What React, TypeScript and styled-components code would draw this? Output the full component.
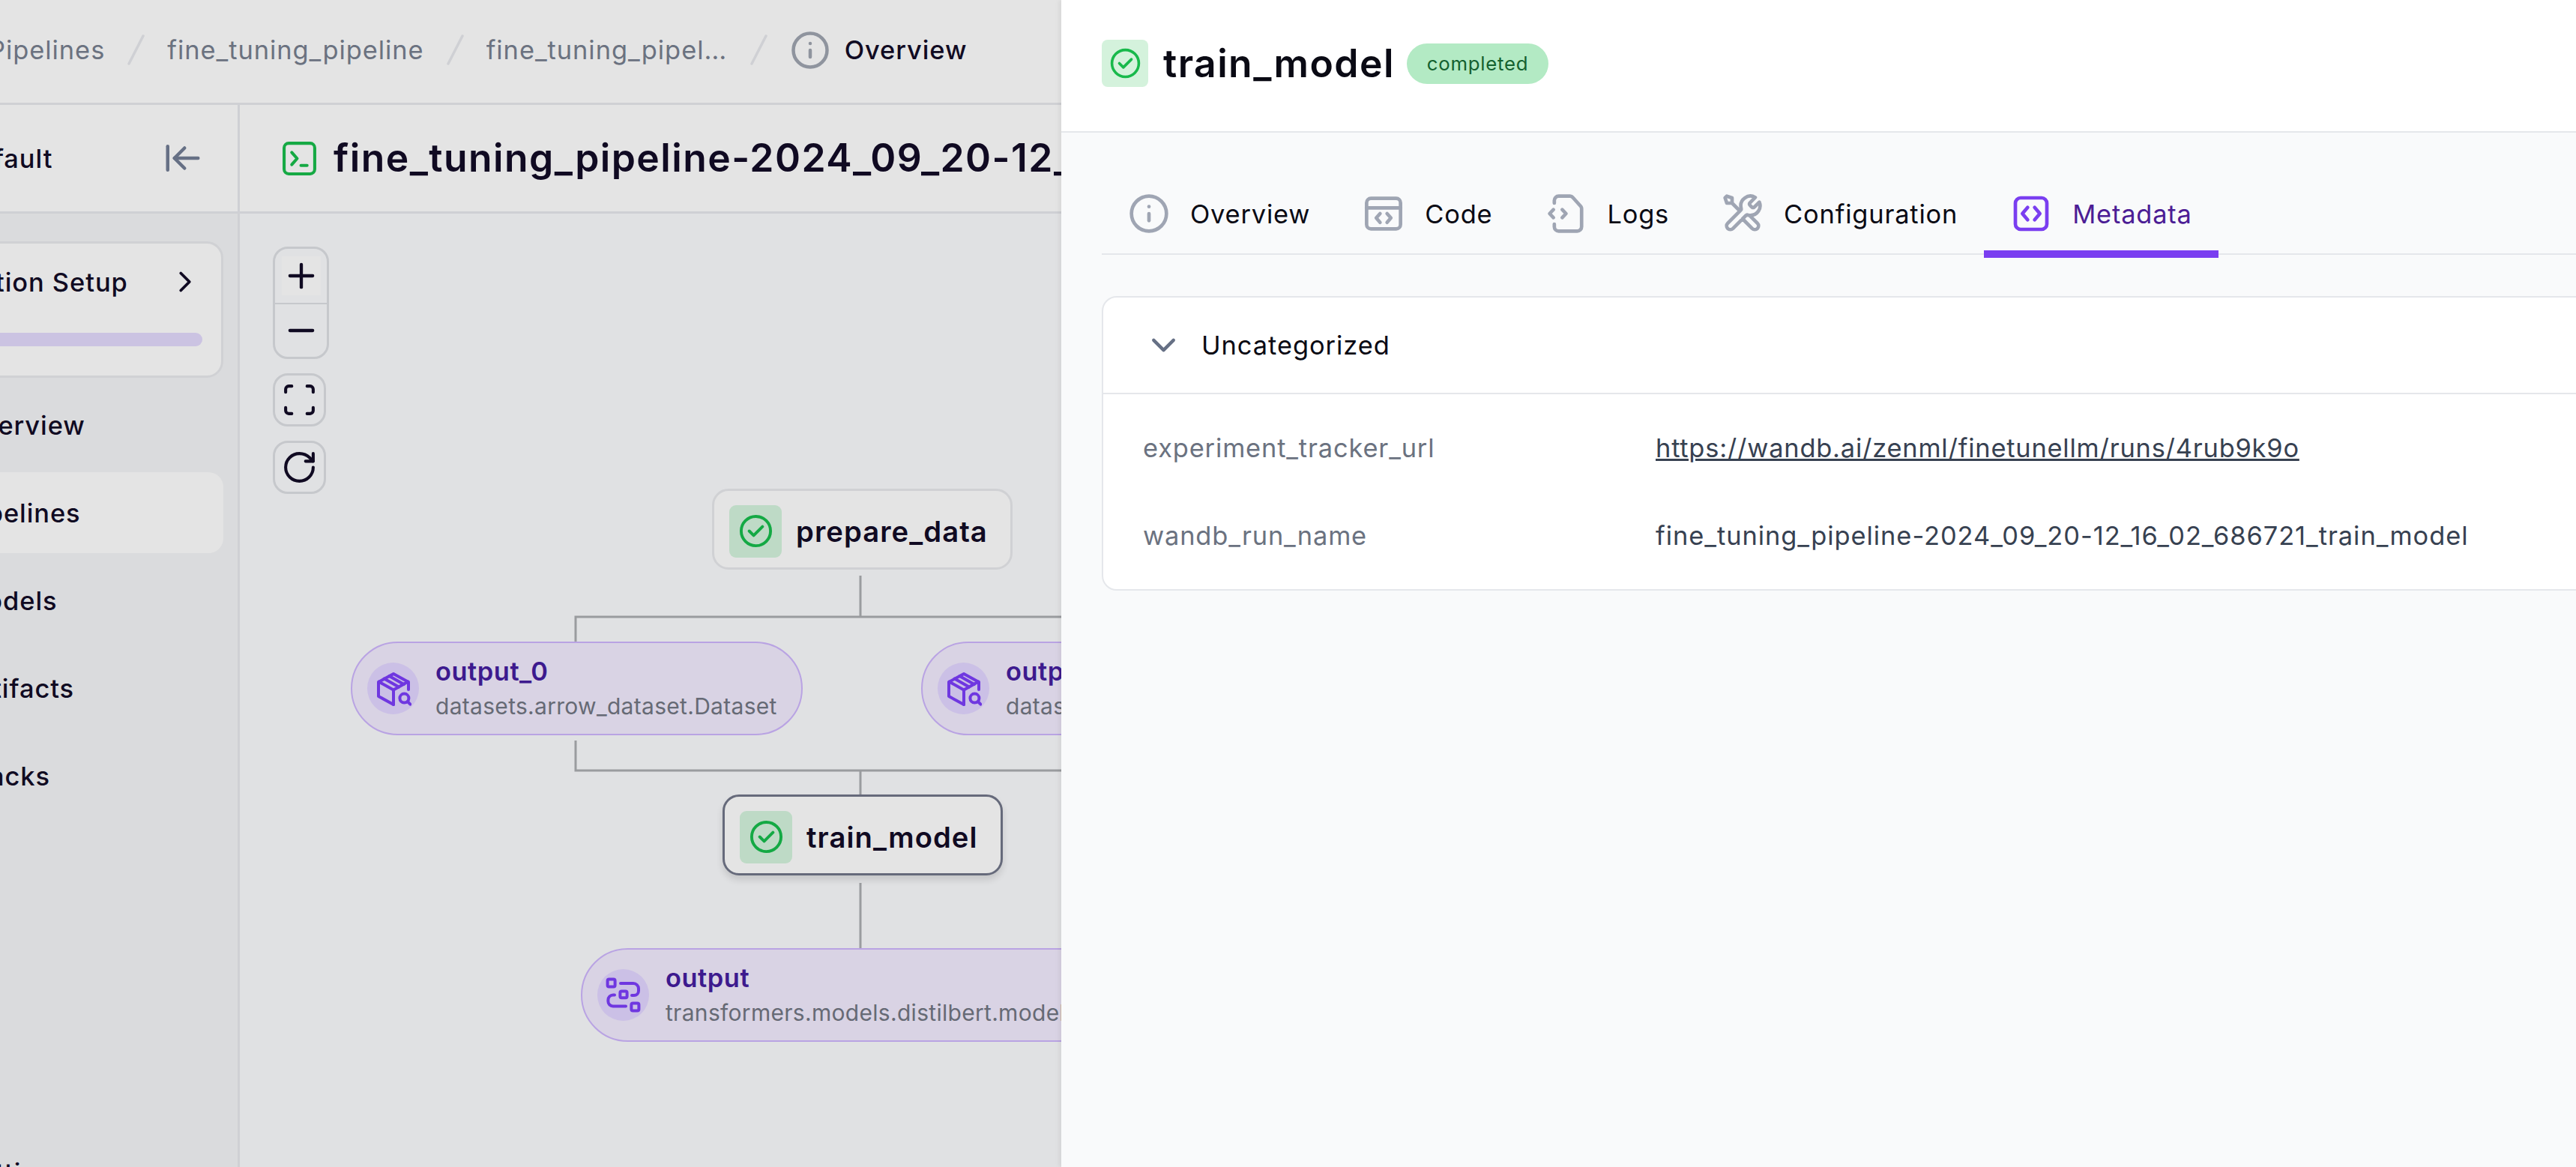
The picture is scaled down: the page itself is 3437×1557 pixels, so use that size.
import React from "react";
import styled, { createGlobalStyle } from "styled-components";
import { ArrowLeftToLine, ChevronDown, ChevronRight, Info, Minus, Plus, RotateCw, Scan } from "lucide-react";

const GlobalStyle = createGlobalStyle`
  html, body {
    margin: 0;
    padding: 0;
    overflow: hidden;
    background: #ffffff;
  }
  * {
    box-sizing: border-box;
    letter-spacing: 0.028em;
  }
`;

const Page = styled.div`
  display: flex;
  width: 3437px;
  height: 1557px;
  overflow: hidden;
  font-family: "Inter", "Noto Sans", sans-serif;
  font-optical-sizing: none;
  font-size: 34.4px;
  color: #100a22;
`;

const Dimmed = styled.div`
  flex: 0 0 1416px;
  display: flex;
  flex-direction: column;
  overflow: hidden;
  background: #e4e4e4;
`;

const TopBar = styled.header`
  flex: 0 0 140px;
  display: flex;
  align-items: center;
  gap: 30px;
  margin-left: -15px;
  padding-bottom: 4px;
  border-bottom: 3px solid #cfd0d4;
  white-space: nowrap;
`;

const Crumb = styled.span<{ $max?: number }>`
  color: #6b7280;
  max-width: ${(p) => (p.$max ? `${p.$max}px` : "none")};
  overflow: hidden;
  text-overflow: ellipsis;
`;

const CrumbCurrent = styled.span`
  display: flex;
  align-items: center;
  gap: 19px;
  font-weight: 500;
  color: #100a22;
`;

const Body = styled.div`
  flex: 1;
  display: flex;
  min-height: 0;
`;

const Sidebar = styled.aside`
  flex: 0 0 320px;
  display: flex;
  flex-direction: column;
  background: #dadbdd;
  border-right: 3px solid #cfd0d4;
  overflow: hidden;
`;

const SideHead = styled.div`
  flex: 0 0 145px;
  display: flex;
  align-items: center;
  justify-content: space-between;
  margin-left: -55px;
  padding-right: 46px;
  background: #e4e4e4;
  border-bottom: 3px solid #cfd0d4;
  font-weight: 500;
`;

const SideBody = styled.div`
  flex: 1;
  display: flex;
  flex-direction: column;
  padding: 37px 19px 0 0;
`;

const SetupCard = styled.div`
  height: 182px;
  margin-left: -60px;
  padding: 28px 25px 0 0;
  background: #e4e4e4;
  border: 3px solid #d0d1d4;
  border-radius: 22px;
`;

const SetupRow = styled.div`
  display: flex;
  align-items: center;
  justify-content: space-between;
  font-weight: 500;
  margin-left: -72px;
`;

const SetupBar = styled.div`
  height: 18px;
  margin-top: 45px;
  background: #cbc3e2;
  border-radius: 9px;
`;

const NavList = styled.nav`
  display: flex;
  flex-direction: column;
  gap: 9px;
  margin: 9px 0 0 -100px;
`;

const NavItem = styled.div<{ $active?: boolean }>`
  height: 108px;
  display: flex;
  align-items: center;
  padding-left: 50px;
  font-weight: 500;
  border-radius: 20px;
  background: ${(p) => (p.$active ? "#e4e4e4" : "transparent")};
`;

const NavFooter = styled(NavItem)`
  margin-top: 412px;
`;

const Main = styled.main`
  flex: 1;
  min-width: 0;
  display: flex;
  flex-direction: column;
`;

const MainHead = styled.div`
  flex: 0 0 145px;
  display: flex;
  align-items: center;
  gap: 21px;
  padding-left: 55px;
  border-bottom: 3px solid #cfd0d4;
  white-space: nowrap;
  overflow: hidden;
  svg {
    flex: none;
  }
`;

const RunTitle = styled.h1`
  margin: 0;
  font-size: 51.6px;
  font-weight: 600;
  line-height: 1;
`;

const Canvas = styled.div`
  position: relative;
  flex: 1;
  background: #e0e1e3;
  padding: 44px 0 0 44px;
`;

const Controls = styled.div`
  position: relative;
  display: flex;
  flex-direction: column;
  align-items: flex-start;
  gap: 19px;
  z-index: 2;
`;

const ZoomGroup = styled.div`
  width: 75px;
  display: flex;
  flex-direction: column;
  background: #e0e1e3;
  border: 3px solid #c6c8cc;
  border-radius: 20px;
  color: #100a22;
`;

const ZoomStep = styled.div<{ $hover?: boolean }>`
  height: 72px;
  display: flex;
  align-items: center;
  justify-content: center;
  & + & {
    border-top: 2px solid #c6c8cc;
  }
  svg {
    background: ${(p) => (p.$hover ? "#e4e4e4" : "transparent")};
  }
`;

const ControlButton = styled.div`
  width: 71px;
  height: 71px;
  display: flex;
  align-items: center;
  justify-content: center;
  background: #e0e1e3;
  border: 3px solid #c6c8cc;
  border-radius: 20px;
  color: #100a22;
`;

const Edges = styled.svg`
  position: absolute;
  left: 0;
  top: 0;
  width: 1100px;
  height: 1272px;
`;

const StepNode = styled.div<{ $x: number; $y: number; $selected?: boolean }>`
  position: absolute;
  left: ${(p) => p.$x}px;
  top: ${(p) => p.$y}px;
  height: 108px;
  display: flex;
  align-items: center;
  gap: 19px;
  padding: 5px 30px 0 20px;
  background: #e4e4e4;
  border: ${(p) => (p.$selected ? "3px solid #666a7b" : "3px solid #d0d1d4")};
  border-radius: 22px;
  box-shadow: ${(p) => (p.$selected ? "0 6px 10px rgba(0, 0, 0, 0.12)" : "none")};
  font-size: 38.2px;
  font-weight: 600;
  white-space: nowrap;
`;

const StepIcon = styled.div`
  width: 70px;
  height: 70px;
  display: flex;
  align-items: center;
  justify-content: center;
  background: #bedac6;
  border-radius: 9px;
  color: #14a944;
`;

const ArtifactNode = styled.div<{ $x: number; $y: number }>`
  position: absolute;
  left: ${(p) => p.$x}px;
  top: ${(p) => p.$y}px;
  height: 125px;
  display: flex;
  align-items: center;
  gap: 22px;
  padding: 0 32px 0 20px;
  background: #d9d3e4;
  border: 2.5px solid #b9a3e3;
  border-radius: 63px;
  white-space: nowrap;
`;

const ArtifactIcon = styled.div`
  width: 69px;
  height: 69px;
  flex: none;
  display: flex;
  align-items: center;
  justify-content: center;
  background: #cbc0e6;
  border-radius: 50%;
  color: #6f37e0;
`;

const ArtifactText = styled.div`
  display: flex;
  flex-direction: column;
  gap: 8px;
`;

const ArtifactName = styled.div`
  font-weight: 600;
  line-height: 38px;
  letter-spacing: 0.016em;
  color: #3d1a8e;
`;

const ArtifactType = styled.div`
  font-size: 30px;
  line-height: 38px;
  letter-spacing: 0.01em;
  color: #666a75;
`;

const Panel = styled.section`
  flex: 1;
  min-width: 0;
  position: relative;
  display: flex;
  flex-direction: column;
  overflow: hidden;
  background: #f9fafb;
  box-shadow: -3px 0 6px rgba(0, 0, 0, 0.06);
`;

const PanelHead = styled.div`
  flex: 0 0 177px;
  display: flex;
  align-items: center;
  padding: 0 0 6px 54px;
  background: #ffffff;
  border-bottom: 2px solid #e5e7eb;
`;

const PanelIcon = styled.div`
  width: 62px;
  height: 63px;
  display: flex;
  align-items: center;
  justify-content: center;
  background: #d4f2dc;
  border-radius: 8px;
  color: #18b94b;
`;

const PanelTitle = styled.h2`
  margin: 0 16px 0 20px;
  font-size: 51.6px;
  font-weight: 600;
  line-height: 1;
  color: #0a0a14;
`;

const StatusPill = styled.span`
  height: 54px;
  display: flex;
  align-items: center;
  padding: 0 27px;
  background: #b3eac4;
  border-radius: 27px;
  font-size: 25.8px;
  color: #14612f;
`;

const PanelBody = styled.div`
  flex: 1;
  padding-left: 54px;
`;

const TabBar = styled.div`
  height: 103px;
  margin-top: 60px;
  display: flex;
  align-items: flex-start;
  border-bottom: 2px solid #e5e7eb;
`;

const Tab = styled.div<{ $active?: boolean }>`
  display: flex;
  align-items: center;
  gap: 27px;
  padding: 20px 35px 21px;
  border-bottom: 10px solid ${(p) => (p.$active ? "#7a3ef0" : "transparent")};
  letter-spacing: 0.024em;
  color: ${(p) => (p.$active ? "#4c1d95" : "#0a0a14")};
  white-space: nowrap;
  svg {
    flex: none;
    color: ${(p) => (p.$active ? "#7a3ef0" : "#9fa5b3")};
  }
`;

const MetaCard = styled.div`
  width: 2400px;
  margin-top: 55px;
  background: #ffffff;
  border: 2px solid #e5e7eb;
  border-radius: 20px;
`;

const MetaHead = styled.div`
  height: 129px;
  display: flex;
  align-items: center;
  gap: 24px;
  padding-left: 54px;
  border-bottom: 2px solid #e5e7eb;
  color: #0a0a14;
  svg {
    color: #667085;
  }
`;

const MetaRows = styled.div`
  padding: 13px 0 13px 53px;
`;

const MetaRow = styled.div`
  height: 117px;
  display: grid;
  grid-template-columns: 684px 1fr;
  align-items: center;
`;

const MetaKey = styled.span`
  letter-spacing: 0.025em;
  color: #6b7280;
`;

const MetaValue = styled.span`
  color: #374151;
`;

const MetaLink = styled.a`
  letter-spacing: 0.023em;
  color: #374151;
  text-decoration: underline;
`;

function CrumbSlash() {
  return (
    <svg width="23" height="41" viewBox="0 0 23 41" fill="none">
      <path d="M2 39 21 2" stroke="#cfd0d4" strokeWidth="3.5" strokeLinecap="round" />
    </svg>
  );
}

function CheckCircle({ size }: { size: number }) {
  return (
    <svg width={size} height={size} viewBox="0 0 24 24" fill="none" stroke="currentColor" strokeWidth="2" strokeLinecap="round" strokeLinejoin="round">
      <circle cx="12" cy="12" r="10" />
      <path d="m7.500 12 3 3 6-6" />
    </svg>
  );
}

function TerminalIcon() {
  return (
    <svg width="49" height="49" viewBox="0 0 24 24" fill="none" stroke="#16a944" strokeWidth="2" strokeLinecap="round" strokeLinejoin="round">
      <rect x="2" y="2" width="20" height="20" rx="3" />
      <path d="m7 8 3.500 4L7 16M13 16.500h4" />
    </svg>
  );
}

function PackageSearchIcon() {
  return (
    <svg width="48" height="48" viewBox="0 0 24 24" fill="none" stroke="currentColor" strokeWidth="2" strokeLinecap="round" strokeLinejoin="round">
      <path d="M22 12.500v-5L12 2 2 7.500V17l10 5.500" />
      <path d="M2.300 7.300 12 12.800l9.700-5.500M12 12.800v9.700" />
      <path d="m5.800 5.300 9.700 5.500M9.200 3.500l9.700 5.500" />
      <circle cx="19.200" cy="18.300" r="3" />
      <path d="m21.400 20.500 1.800 1.800" />
    </svg>
  );
}

function ModelIcon() {
  return (
    <svg width="48" height="48" viewBox="0 0 24 24" fill="none" stroke="currentColor" strokeWidth="2" strokeLinecap="round" strokeLinejoin="round">
      <rect x="1.300" y="1.300" width="5" height="5" rx="1" />
      <rect x="9.700" y="9.200" width="4.600" height="4.400" rx="1" />
      <rect x="17.200" y="17.200" width="5" height="5" rx="1" />
      <path d="M10 4h8.500A3.500 3.500 0 0 1 22 7.500V9a3 3 0 0 1-3 3h-1.500" />
      <path d="M6 11.700H5A3.300 3.300 0 0 0 1.700 15v1a3.200 3.200 0 0 0 3.200 3.200h8.600" />
    </svg>
  );
}

function CodeBrowserIcon() {
  return (
    <svg width="56" height="56" viewBox="0 0 24 24" fill="none" stroke="currentColor" strokeWidth="2" strokeLinecap="round" strokeLinejoin="round">
      <rect x="2.300" y="3.300" width="19.400" height="17.400" rx="2.500" />
      <path d="M2.300 8.700h19.400" />
      <path d="m10 12-2.200 2.500L10 17M14 12l2.200 2.500L14 17" />
    </svg>
  );
}

function LogsIcon() {
  return (
    <svg width="56" height="56" viewBox="0 0 24 24" fill="none" stroke="currentColor" strokeWidth="2" strokeLinecap="round" strokeLinejoin="round">
      <path d="M5.500 6V4.500A2.500 2.500 0 0 1 8 2h6.500c.6 0 1.200.3 1.600.8l4.500 5c.3.4.5.8.5 1.300v10.400a2.500 2.500 0 0 1-2.500 2.500H8a2.500 2.500 0 0 1-2.500-2.500V18" />
      <path d="M5 9.700 2.800 12 5 14.300M10 9.700l2.200 2.300-2.200 2.300" />
    </svg>
  );
}

function ToolIcon() {
  return (
    <svg width="56" height="56" viewBox="0 0 24 24" fill="none" stroke="currentColor" strokeWidth="2" strokeLinecap="round" strokeLinejoin="round">
      <path d="M6 6l4.500 4.500M6 6H3L2 3l1-1 3 1v3ZM19.260 2.740l-2.630 2.630c-.4.4-.6.6-.67.82-.06.2-.06.42 0 .62.07.23.27.43.67.82l.24.24c.4.4.6.6.82.67.2.06.42.06.62 0 .23-.07.43-.27.82-.67l2.460-2.460A5.500 5.500 0 0 1 16.500 13c-.37 0-.72-.04-1.070-.1-.49-.1-.73-.15-.88-.13-.16.02-.23.04-.37.11-.13.07-.26.2-.52.46L6.500 20.500a2.120 2.120 0 0 1-3-3l7.160-7.160c.26-.26.39-.39.46-.52.07-.14.1-.21.11-.37.02-.15-.03-.39-.13-.88A5.500 5.500 0 0 1 19.260 2.740ZM12 15l5.500 5.500a2.120 2.120 0 0 0 3-3L15.980 12.980c-.32-.03-.63-.09-.94-.17-.39-.11-.82-.04-1.100.25L12 15Z" />
    </svg>
  );
}

function CodeSquareIcon() {
  return (
    <svg width="56" height="56" viewBox="0 0 24 24" fill="none" stroke="currentColor" strokeWidth="2" strokeLinecap="round" strokeLinejoin="round">
      <rect x="3" y="3" width="18" height="18" rx="3" />
      <path d="M10 8.500 7 12l3 3.500M14 8.500l3 3.500-3 3.500" />
    </svg>
  );
}

const navItems = ["Overview", "Pipelines", "Models", "Artifacts", "Stacks"];

const RUN_NAME = "fine_tuning_pipeline-2024_09_20-12_16_02_686721";

function App() {
  return (
    <Page>
      <GlobalStyle />
      <Dimmed>
        <TopBar>
          <Crumb>Pipelines</Crumb>
          <CrumbSlash />
          <Crumb>fine_tuning_pipeline</Crumb>
          <CrumbSlash />
          <Crumb $max={322}>{RUN_NAME}</Crumb>
          <CrumbSlash />
          <CrumbCurrent>
            <Info size={54} color="#8f949e" strokeWidth={2} />
            Overview
          </CrumbCurrent>
        </TopBar>
        <Body>
          <Sidebar>
            <SideHead>
              <span>Default</span>
              <ArrowLeftToLine size={54} color="#667085" strokeWidth={2} />
            </SideHead>
            <SideBody>
              <SetupCard>
                <SetupRow>
                  <span>Production Setup</span>
                  <ChevronRight size={46} strokeWidth={2} />
                </SetupRow>
                <SetupBar />
              </SetupCard>
              <NavList>
                {navItems.map((item) => (
                  <NavItem key={item} $active={item === "Pipelines"}>
                    {item}
                  </NavItem>
                ))}
                <NavFooter>Settings</NavFooter>
              </NavList>
            </SideBody>
          </Sidebar>
          <Main>
            <MainHead>
              <TerminalIcon />
              <RunTitle>{RUN_NAME}</RunTitle>
            </MainHead>
            <Canvas>
              <Edges viewBox="0 0 1100 1272" fill="none" stroke="#9a9c9f" strokeWidth="3">
                <path d="M828 483V538M448 572V538H1100M448 703V743H1100M828 743V775M828 893V980" />
              </Edges>
              <Controls>
                <ZoomGroup>
                  <ZoomStep $hover>
                    <Plus size={52} strokeWidth={2} />
                  </ZoomStep>
                  <ZoomStep>
                    <Minus size={52} strokeWidth={2} />
                  </ZoomStep>
                </ZoomGroup>
                <ControlButton>
                  <Scan size={49} strokeWidth={2} />
                </ControlButton>
                <ControlButton>
                  <RotateCw size={49} strokeWidth={2} />
                </ControlButton>
              </Controls>
              <StepNode $x={630} $y={367}>
                <StepIcon>
                  <CheckCircle size={47} />
                </StepIcon>
                prepare_data
              </StepNode>
              <ArtifactNode $x={148} $y={571}>
                <ArtifactIcon>
                  <PackageSearchIcon />
                </ArtifactIcon>
                <ArtifactText>
                  <ArtifactName>output_0</ArtifactName>
                  <ArtifactType>datasets.arrow_dataset.Dataset</ArtifactType>
                </ArtifactText>
              </ArtifactNode>
              <ArtifactNode $x={909} $y={571}>
                <ArtifactIcon>
                  <PackageSearchIcon />
                </ArtifactIcon>
                <ArtifactText>
                  <ArtifactName>output_1</ArtifactName>
                  <ArtifactType>datasets.arrow_dataset.Dataset</ArtifactType>
                </ArtifactText>
              </ArtifactNode>
              <StepNode $x={644} $y={775} $selected>
                <StepIcon>
                  <CheckCircle size={47} />
                </StepIcon>
                train_model
              </StepNode>
              <ArtifactNode $x={455} $y={980}>
                <ArtifactIcon>
                  <ModelIcon />
                </ArtifactIcon>
                <ArtifactText>
                  <ArtifactName>output</ArtifactName>
                  <ArtifactType>transformers.models.distilbert.modeling_distilbert.DistilBertForSequenceClassification</ArtifactType>
                </ArtifactText>
              </ArtifactNode>
            </Canvas>
          </Main>
        </Body>
      </Dimmed>
      <Panel>
        <PanelHead>
          <PanelIcon>
            <CheckCircle size={43} />
          </PanelIcon>
          <PanelTitle>train_model</PanelTitle>
          <StatusPill>completed</StatusPill>
        </PanelHead>
        <PanelBody>
          <TabBar>
            <Tab>
              <Info size={56} strokeWidth={2} />
              Overview
            </Tab>
            <Tab>
              <CodeBrowserIcon />
              Code
            </Tab>
            <Tab>
              <LogsIcon />
              Logs
            </Tab>
            <Tab>
              <ToolIcon />
              Configuration
            </Tab>
            <Tab $active>
              <CodeSquareIcon />
              Metadata
            </Tab>
          </TabBar>
          <MetaCard>
            <MetaHead>
              <ChevronDown size={53} strokeWidth={2} />
              Uncategorized
            </MetaHead>
            <MetaRows>
              <MetaRow>
                <MetaKey>experiment_tracker_url</MetaKey>
                <MetaLink href="#">https://wandb.ai/zenml/finetunellm/runs/4rub9k9o</MetaLink>
              </MetaRow>
              <MetaRow>
                <MetaKey>wandb_run_name</MetaKey>
                <MetaValue>{RUN_NAME}_train_model</MetaValue>
              </MetaRow>
            </MetaRows>
          </MetaCard>
        </PanelBody>
      </Panel>
    </Page>
  );
}

export default App;
